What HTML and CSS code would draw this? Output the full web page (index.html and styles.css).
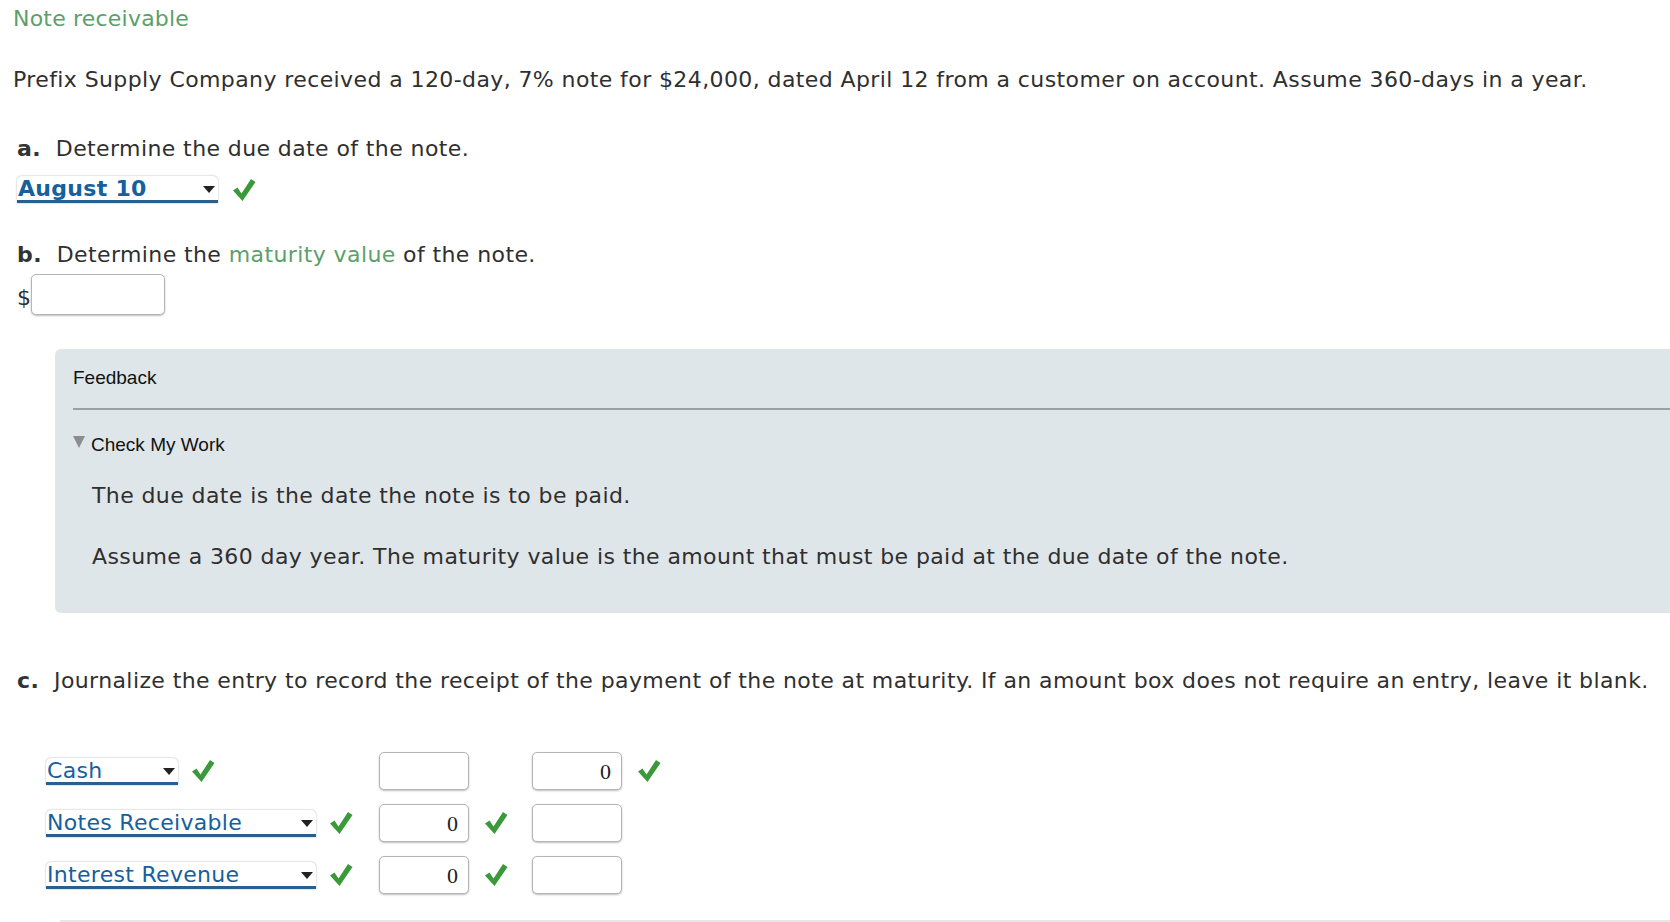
FILE: index.html
```html
<!DOCTYPE html>
<html>
<head>
<meta charset="utf-8">
<link rel="stylesheet" href="styles.css">
</head>
<body>
<div class="page">
  <div class="title">Note receivable</div>
  <p class="intro">Prefix Supply Company received a 120-day, 7% note for $24,000, dated April 12 from a customer on account. Assume 360-days in a year.</p>

  <div class="q q-a"><b>a.</b>&nbsp; Determine the due date of the note.</div>
  <div class="answer-row">
    <div class="select select-bold select-date"><span>August 10</span><i class="caret"></i></div>
    <svg class="check" viewBox="0 0 24 24"><path d="M1 12.5 L5.5 9.5 L9.5 15.5 L19 1 L23.5 4 L10.5 23 Z"/></svg>
  </div>

  <div class="q q-b"><b>b.</b>&nbsp; Determine the <span class="green">maturity value</span> of the note.</div>
  <div class="money-row"><span class="dollar">$</span><div class="input input-money"></div></div>

  <div class="feedback">
    <div class="fb-title">Feedback</div>
    <div class="fb-rule"></div>
    <div class="fb-toggle"><i class="tri"></i>Check My Work</div>
    <p class="fb-text fb-1">The due date is the date the note is to be paid.</p>
    <p class="fb-text fb-2">Assume a 360 day year. The maturity value is the amount that must be paid at the due date of the note.</p>
  </div>

  <div class="q q-c"><b>c.</b>&nbsp; Journalize the entry to record the receipt of the payment of the note at maturity. If an amount box does not require an entry, leave it blank.</div>

  <div class="journal">
    <div class="jrow">
      <div class="acct-cell">
        <div class="select select-cash"><span>Cash</span><i class="caret"></i></div>
        <svg class="check" viewBox="0 0 24 24"><path d="M1 12.5 L5.5 9.5 L9.5 15.5 L19 1 L23.5 4 L10.5 23 Z"/></svg>
      </div>
      <div class="amt-cell"><div class="input amt"></div><span class="check-slot"></span></div>
      <div class="amt-cell"><div class="input amt">0</div><svg class="check" viewBox="0 0 24 24"><path d="M1 12.5 L5.5 9.5 L9.5 15.5 L19 1 L23.5 4 L10.5 23 Z"/></svg></div>
    </div>
    <div class="jrow">
      <div class="acct-cell">
        <div class="select select-long"><span>Notes Receivable</span><i class="caret"></i></div>
        <svg class="check" viewBox="0 0 24 24"><path d="M1 12.5 L5.5 9.5 L9.5 15.5 L19 1 L23.5 4 L10.5 23 Z"/></svg>
      </div>
      <div class="amt-cell"><div class="input amt">0</div><svg class="check" viewBox="0 0 24 24"><path d="M1 12.5 L5.5 9.5 L9.5 15.5 L19 1 L23.5 4 L10.5 23 Z"/></svg></div>
      <div class="amt-cell"><div class="input amt"></div></div>
    </div>
    <div class="jrow">
      <div class="acct-cell">
        <div class="select select-long"><span>Interest Revenue</span><i class="caret"></i></div>
        <svg class="check" viewBox="0 0 24 24"><path d="M1 12.5 L5.5 9.5 L9.5 15.5 L19 1 L23.5 4 L10.5 23 Z"/></svg>
      </div>
      <div class="amt-cell"><div class="input amt">0</div><svg class="check" viewBox="0 0 24 24"><path d="M1 12.5 L5.5 9.5 L9.5 15.5 L19 1 L23.5 4 L10.5 23 Z"/></svg></div>
      <div class="amt-cell"><div class="input amt"></div></div>
    </div>
  </div>
  <div class="bottom-rule"></div>
</div>
</body>
</html>
```

FILE: styles.css
```css
html, body {
  margin: 0;
  padding: 0;
  background: #ffffff;
}
body {
  font-family: "DejaVu Sans", Verdana, sans-serif;
  font-size: 22px;
  letter-spacing: 0.4px;
  color: #2f2f2f;
  overflow: hidden;
}
.page {
  padding: 6px 0 0 13px;
}
.title {
  color: #5b9f6b;
  line-height: 26px;
  height: 26px;
  letter-spacing: 0.2px;
}
.intro {
  margin: 35px 0 0 0;
  line-height: 26px;
  white-space: nowrap;
}
.q {
  line-height: 26px;
  white-space: nowrap;
  padding-left: 4px;
}
.q b {
  font-weight: bold;
  color: #333;
}
.q-a {
  margin-top: 43px;
}
.answer-row {
  display: flex;
  align-items: center;
  gap: 14px;
  margin-top: 14px;
  padding-left: 4px;
  height: 27px;
}
.green {
  color: #5b9f6b;
}
.select {
  position: relative;
  box-sizing: border-box;
  height: 27px;
  background: #fff;
  border-radius: 5px 5px 0 0;
  border-bottom: 3px solid #2a5e8c;
  box-shadow: 0 0 2px rgba(0,0,0,0.35);
  color: #15609e;
  line-height: 26px;
  padding-left: 1px;
  white-space: nowrap;
  letter-spacing: 0.3px;
}
.select-bold {
  font-weight: bold;
}
.select-date {
  width: 201px;
}
.caret {
  position: absolute;
  right: 3px;
  top: 10px;
  width: 0;
  height: 0;
  border-left: 6px solid transparent;
  border-right: 6px solid transparent;
  border-top: 7px solid #222;
}
.check {
  width: 24px;
  height: 24px;
  fill: #3a9a3a;
  flex: none;
}
.q-b {
  margin-top: 39px;
}
.money-row {
  display: flex;
  align-items: center;
  margin-top: 6px;
  padding-left: 4px;
  height: 41px;
}
.dollar {
  width: 14px;
  padding-top: 6px;
}
.input {
  box-sizing: border-box;
  background: #fff;
  border: 1px solid #b5b5b5;
  border-radius: 5px;
  box-shadow: 0 1px 2px rgba(0,0,0,0.25);
}
.input-money {
  width: 134px;
  height: 41px;
}
.feedback {
  margin-top: 34px;
  margin-left: 42px;
  background: #dfe6ea;
  border-radius: 6px 0 0 6px;
  height: 264px;
  padding: 0 0 0 18px;
  box-sizing: border-box;
}
.fb-title {
  font-family: "Liberation Sans", Arial, sans-serif;
  font-size: 19px;
  letter-spacing: 0;
  color: #111;
  padding-top: 17px;
  line-height: 24px;
}
.fb-rule {
  margin-top: 18px;
  height: 0;
  border-top: 2px solid #9aa0a3;
}
.fb-toggle {
  font-family: "Liberation Sans", Arial, sans-serif;
  font-size: 19px;
  letter-spacing: 0;
  color: #111;
  line-height: 24px;
  margin-top: 23px;
  display: flex;
  align-items: center;
}
.tri {
  display: inline-block;
  width: 0;
  height: 0;
  border-left: 6px solid transparent;
  border-right: 6px solid transparent;
  border-top: 12px solid #8a8e90;
  margin-right: 6px;
  margin-top: -6px;
}
.fb-text {
  margin: 0;
  padding-left: 19px;
  line-height: 26px;
  white-space: nowrap;
}
.fb-1 {
  margin-top: 26px;
}
.fb-2 {
  margin-top: 35px;
}
.q-c {
  margin-top: 55px;
}
.journal {
  margin-top: 58px;
  padding-left: 33px;
  display: flex;
  flex-direction: column;
  gap: 14px;
}
.jrow {
  display: flex;
  align-items: center;
  height: 38px;
}
.acct-cell {
  width: 333px;
  display: flex;
  align-items: center;
  gap: 13px;
}
.select-cash {
  width: 132px;
}
.select-long {
  width: 270px;
}
.amt-cell {
  width: 153px;
  display: flex;
  align-items: center;
  gap: 15px;
}
.amt {
  width: 90px;
  height: 38px;
  font-family: "Liberation Serif", "Times New Roman", serif;
  font-size: 22px;
  letter-spacing: 0;
  color: #222;
  text-align: right;
  padding-right: 10px;
  line-height: 38px;
}
.check-slot {
  width: 24px;
}
.bottom-rule {
  margin: 26px 0 0 47px;
  border-top: 2px solid #e3e8ea;
}
```
